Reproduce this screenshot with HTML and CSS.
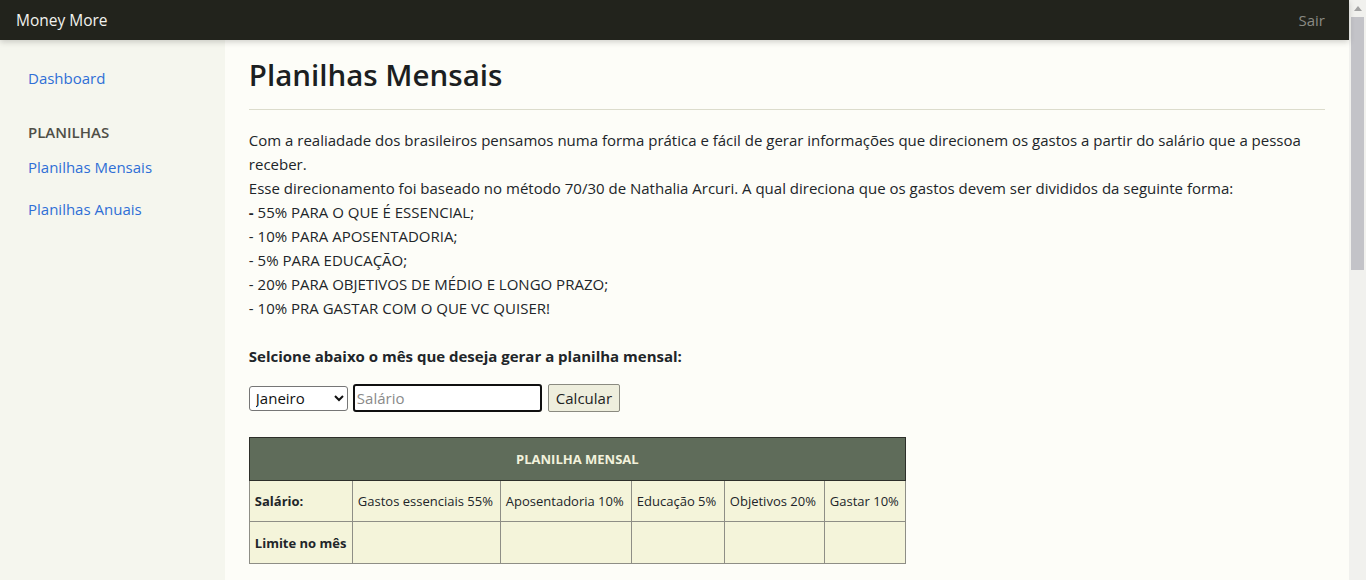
FILE: index.html
```html
<!DOCTYPE html>
<html lang="pt-BR">
<head>
<meta charset="utf-8">
<title>Money More</title>
<link rel="stylesheet" href="styles.css">
</head>
<body>
<div class="app">
  <header class="navbar">
    <a class="brand" href="#">Money More</a>
    <a class="signout" href="#">Sair</a>
  </header>
  <div class="layout">
    <nav class="sidebar">
      <a class="nav-link" href="#">Dashboard</a>
      <h6 class="sidebar-heading">PLANILHAS</h6>
      <a class="nav-link" href="#">Planilhas Mensais</a>
      <a class="nav-link" href="#">Planilhas Anuais</a>
    </nav>
    <main class="main">
      <div class="page-header">
        <h1 class="title">Planilhas Mensais</h1>
      </div>
      <p class="intro">Com a realiadade dos brasileiros pensamos numa forma prática e fácil de gerar informações que direcionem os gastos a partir do salário que a pessoa receber.<br>
      Esse direcionamento foi baseado no método 70/30 de Nathalia Arcuri. A qual direciona que os gastos devem ser divididos da seguinte forma:<br>
      <b>-</b> 55% PARA O QUE É ESSENCIAL;<br>
      - 10% PARA APOSENTADORIA;<br>
      - 5% PARA EDUCAÇÃO;<br>
      - 20% PARA OBJETIVOS DE MÉDIO E LONGO PRAZO;<br>
      - 10% PRA GASTAR COM O QUE VC QUISER!</p>
      <p class="lead-label">Selcione abaixo o mês que deseja gerar a planilha mensal:</p>
      <form class="calc-form">
        <select class="month">
          <option>Janeiro</option><option>Fevereiro</option><option>Março</option><option>Abril</option>
          <option>Maio</option><option>Junho</option><option>Julho</option><option>Agosto</option>
          <option>Setembro</option><option>Outubro</option><option>Novembro</option><option>Dezembro</option>
        </select>
        <input class="salary" type="text" placeholder="Salário">
        <button class="calc-btn" type="button">Calcular</button>
      </form>
      <table class="sheet">
        <colgroup>
          <col class="c1"><col class="c2"><col class="c3"><col class="c4"><col class="c5"><col class="c6">
        </colgroup>
        <thead>
          <tr class="head-row"><th colspan="6">PLANILHA MENSAL</th></tr>
        </thead>
        <tbody>
          <tr class="row-a">
            <td class="label">Salário:</td>
            <td>Gastos essenciais 55%</td>
            <td>Aposentadoria 10%</td>
            <td>Educação 5%</td>
            <td>Objetivos 20%</td>
            <td>Gastar 10%</td>
          </tr>
          <tr class="row-b">
            <td class="label">Limite no mês</td>
            <td></td><td></td><td></td><td></td><td></td>
          </tr>
        </tbody>
      </table>
    </main>
  </div>
</div>
<div class="scrollbar" aria-hidden="true">
  <div class="sb-arrow"></div>
  <div class="sb-thumb"></div>
</div>
</body>
</html>
```
FILE: styles.css
```css
* { box-sizing: border-box; }
html, body { margin: 0; padding: 0; }
body {
  display: flex;
  align-items: flex-start;
  font-family: "Open Sans", "Noto Sans", sans-serif;
  font-size: 15px;
  line-height: 24px;
  color: #212529;
  background: #fcfcf7;
}
a { text-decoration: none; }

.app {
  flex: 1;
  min-width: 0;
}

.scrollbar {
  flex: 0 0 17px;
  height: 580px;
  background: #f1f1ee;
  display: flex;
  flex-direction: column;
  align-items: center;
}
.sb-arrow {
  width: 0;
  height: 0;
  margin: 6px 0 6px;
  border-left: 4px solid transparent;
  border-right: 4px solid transparent;
  border-bottom: 5px solid #a3a3a3;
}
.sb-thumb {
  width: 13px;
  height: 253px;
  background: #c3c3c8;
}

.navbar {
  position: relative;
  z-index: 2;
  height: 40px;
  background: #22231c;
  display: flex;
  align-items: center;
  justify-content: space-between;
  padding: 0 24px 0 16px;
  box-shadow: 0 2px 6px rgba(0,0,0,.18);
}
.brand { color: #f2f2ee; font-size: 15.5px; }
.signout { color: #8a8a84; font-size: 15px; }

.layout {
  display: flex;
  min-height: 540px;
}
.sidebar {
  flex: 0 0 16.6667%;
  background: #f5f6ee;
  padding: 17px 12px 0;
  display: flex;
  flex-direction: column;
}
.nav-link {
  display: block;
  padding: 9px 16px;
  line-height: 24px;
  color: #2f6fd6;
  font-size: 15px;
}
.sidebar-heading {
  margin: 23px 0 4px;
  padding: 0 16px;
  font-size: 15px;
  font-weight: 600;
  line-height: 20px;
  color: #4f4f47;
}

.main {
  flex: 1;
  padding: 0 24px 40px;
  background: #fdfdf8;
}
.page-header {
  padding: 16px 0 15px;
  border-bottom: 1px solid #dcdccc;
  margin-bottom: 18px;
}
.title {
  margin: 0;
  font-size: 29.5px;
  font-weight: 600;
  line-height: 38px;
  color: #1c1f22;
}
.intro { margin: 0 0 24px; }
.lead-label { margin: 0 0 16px; font-weight: 700; }

.calc-form {
  display: flex;
  align-items: center;
  gap: 5px;
  margin-bottom: 25px;
}
.month {
  width: 99px;
  height: 25px;
  font-family: inherit;
  font-size: 15px;
  border: 1px solid #767676;
  border-radius: 3px;
  background: #fff;
  color: #111;
  padding: 0 2px;
}
.salary {
  width: 189px;
  height: 28px;
  font-family: inherit;
  font-size: 15px;
  border: 2px solid #101010;
  border-radius: 3px;
  padding: 0 2px;
  background: #fff;
}
.salary::placeholder { color: #8a8a8a; }
.calc-btn {
  margin-left: 1px;
  height: 28px;
  padding: 0 7px;
  font-family: inherit;
  font-size: 15px;
  color: #222;
  background: #eeeedd;
  border: 1px solid #8a8a80;
  border-radius: 2px;
}

.sheet {
  border-collapse: collapse;
  table-layout: fixed;
  width: 656px;
  font-size: 13px;
  line-height: 18px;
}
.c1 { width: 103px; }
.c2 { width: 148px; }
.c3 { width: 131px; }
.c4 { width: 93px; }
.c5 { width: 100px; }
.c6 { width: 81px; }
.sheet th {
  height: 43px;
  background: #5f6c5a;
  color: #f2f2dc;
  font-weight: 700;
  text-align: center;
  border: 1px solid #2d2f2a;
}
.sheet td {
  background: #f4f4da;
  border: 1px solid #8e8e86;
  padding: 0 5px;
  white-space: nowrap;
  overflow: hidden;
}
.row-a td { height: 41px; }
.row-b td { height: 42px; }
.sheet .label { font-weight: 700; }
```
